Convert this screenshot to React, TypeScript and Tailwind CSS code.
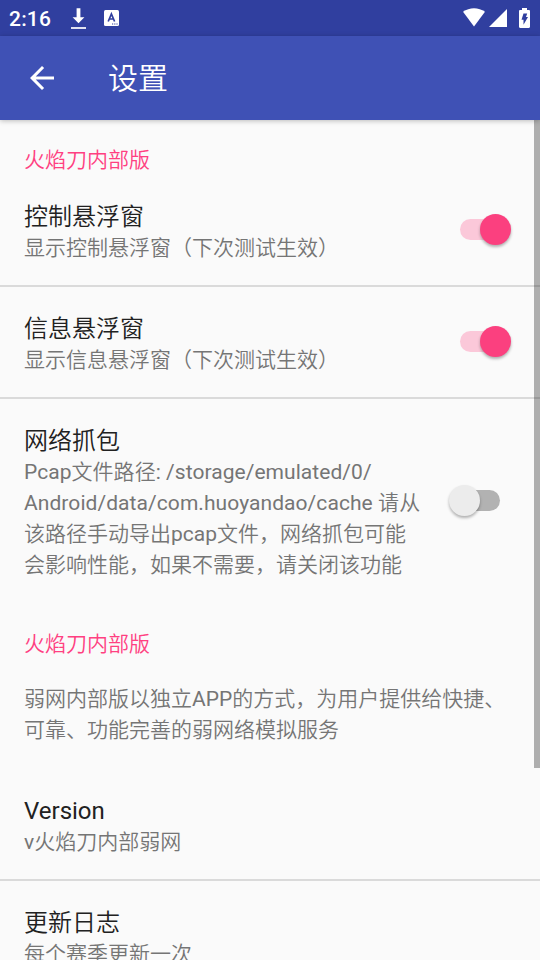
import { useState, type ReactNode } from 'react';
import { clsx } from 'clsx';

interface PreferenceProps {
  title?: string;
  lines: ReactNode[];
  divider?: boolean;
  checked?: boolean;
  className?: string;
  onToggle?: () => void;
}

function StatusBar() {
  return (
    <div className="h-9 shrink-0 bg-[#303f9f] text-white flex items-center justify-between pl-[9px] pr-2.5">
      <div className="flex items-center">
        <span className="w-[42px] text-[21px] font-medium leading-9 pt-[2px] tracking-[0.2px]">2:16</span>
        <svg className="ml-5 mt-0.5 w-[15px] h-[22px]" viewBox="0 0 15 22" fill="currentColor">
          <path d="M5.600.300h3.800v9h4L7.500 15.200 1.600 9.300h4z" />
          <path d="M0 19h15v2H0z" opacity="0.85" />
        </svg>
        <svg className="ml-[18px] w-[15px] h-4" viewBox="0 0 15 16">
          <rect width="15" height="16" rx="1.5" fill="#fff" />
          <path d="M4.200 11.500 7.400 4l3.200 7.500M5.400 9h4" fill="none" stroke="#303f9f" strokeWidth="1.7" />
          <path d="M8 13.500h1.200v1H8zM10.200 13.500h1.200v1h-1.200zM12.400 13.500h1.200v1h-1.200z" fill="#303f9f" />
        </svg>
      </div>
      <div className="flex items-center -mt-px">
        <svg className="w-[22px] h-[19px]" viewBox="0 0 22 19" fill="currentColor">
          <path d="M0 3.800C6.500-1.100 15.500-1.100 22 3.800L11 18.500z" />
        </svg>
        <svg className="ml-1 mt-px w-[18px] h-[18px]" viewBox="0 0 18 18" fill="currentColor">
          <path d="M18 0v18H0z" />
        </svg>
        <svg className="ml-3 w-[11px] h-5" viewBox="0 0 11 20">
          <path d="M3 0h5v2h1.800C10.500 2 11 2.500 11 3.200V18.800c0 .7-.5 1.200-1.200 1.200H1.200C.5 20 0 19.500 0 18.800V3.200C0 2.500.5 2 1.200 2H3z" fill="#fff" />
          <path d="M4.500 5.500h3.700L7 9h2L4.500 16.800V11.700H2.500z" fill="#303f9f" />
        </svg>
      </div>
    </div>
  );
}

function Toolbar() {
  return (
    <div className="relative z-10 h-21 shrink-0 bg-[#3f51b5] text-white flex items-center pl-[30px] shadow-[0_1px_5px_rgba(0,0,0,0.25)]">
      <svg className="w-6 h-6" viewBox="4 4 16 16" fill="currentColor">
        <path d="M20 11H7.830l5.590-5.590L12 4l-8 8 8 8 1.410-1.410L7.830 13H20v-2z" />
      </svg>
      <h1 className="ml-[54px] pt-0.5 text-[30px] leading-[42px]">设置</h1>
    </div>
  );
}

function Toggle({ checked, onToggle }: { checked: boolean; onToggle?: () => void }) {
  return (
    <button
      role="switch"
      aria-checked={checked}
      onClick={onToggle}
      className={clsx('mb-1.5 h-[31px] w-[51px] shrink-0 flex items-center', checked ? 'mr-[29px]' : 'mr-10')}
    >
      <span
        className={clsx(
          'h-[21px] w-[51px] rounded-full flex items-center',
          checked
            ? 'justify-end bg-[#fbc8d9]'
            : 'justify-start bg-[linear-gradient(90deg,transparent_16px,#b2b2b2_16px)]'
        )}
      >
        <span
          className={clsx(
            'size-[31px] rounded-full shadow-[0_2px_3px_rgba(0,0,0,0.3)]',
            checked ? 'bg-[#fb407f]' : 'bg-[#ececec]'
          )}
        />
      </span>
    </button>
  );
}

function Category({ children }: { children: string }) {
  return (
    <h2 className="pl-6 pt-[25px] text-[21px] leading-[30px] text-[#ff4081]">{children}</h2>
  );
}

function Preference({ title, lines, divider, checked, className, onToggle }: PreferenceProps) {
  return (
    <div
      className={clsx(
        'flex items-center justify-between pl-6 shrink-0',
        divider && 'border-b-2 border-[#dadada]',
        className
      )}
    >
      <div>
        {title && <div className="text-2xl leading-8 text-[#212121]">{title}</div>}
        <div className="text-[21px] leading-[31px] text-[#757575] whitespace-nowrap">
          {lines.map((line, i) => (
            <div key={i}>{line}</div>
          ))}
        </div>
      </div>
      {checked !== undefined && <Toggle checked={checked} onToggle={onToggle} />}
    </div>
  );
}

export default function App() {
  const [control, setControl] = useState(true);
  const [info, setInfo] = useState(true);
  const [capture, setCapture] = useState(false);

  return (
    <div
      lang="zh-CN"
      className="w-[540px] h-[960px] overflow-hidden flex flex-col bg-[#fafafa] font-[Roboto,'Noto_Sans_CJK_SC_DemiLight','Noto_Sans_CJK_SC_Light','Noto_Sans_CJK_SC',sans-serif]"
    >
      <StatusBar />
      <Toolbar />
      <div className="relative flex-1 min-h-0 overflow-hidden">
        <Category>火焰刀内部版</Category>
        <Preference
          title="控制悬浮窗"
          lines={['显示控制悬浮窗（下次测试生效）']}
          checked={control}
          onToggle={() => setControl(!control)}
          className="pt-[26px] pb-[21px]"
          divider
        />
        <Preference
          title="信息悬浮窗"
          lines={['显示信息悬浮窗（下次测试生效）']}
          checked={info}
          onToggle={() => setInfo(!info)}
          className="pt-[26px] pb-[21px]"
          divider
        />
        <Preference
          title="网络抓包"
          lines={[
            <span className="tracking-[0.05px]">Pcap文件路径: /storage/emulated/0/</span>,
            <span className="tracking-[0.07px]">Android/data/com.huoyandao/cache 请从</span>,
            '该路径手动导出pcap文件，网络抓包可能',
            '会影响性能，如果不需要，请关闭该功能',
          ]}
          checked={capture}
          onToggle={() => setCapture(!capture)}
          className="pt-[26px] pb-[23px]"
        />
        <Category>火焰刀内部版</Category>
        <Preference
          lines={['弱网内部版以独立APP的方式，为用户提供给快捷、', '可靠、功能完善的弱网络模拟服务']}
          className="pt-[25px] pb-6"
        />
        <Preference title="Version" lines={['v火焰刀内部弱网']} className="pt-[25px] pb-[21px]" divider />
        <Preference title="更新日志" lines={['每个赛季更新一次']} className="pt-[26px]" />

        {/* Scrollbar thumb */}
        <div className="absolute right-0 top-0 w-1.5 h-[648px] bg-black/30" />
      </div>
    </div>
  );
}
